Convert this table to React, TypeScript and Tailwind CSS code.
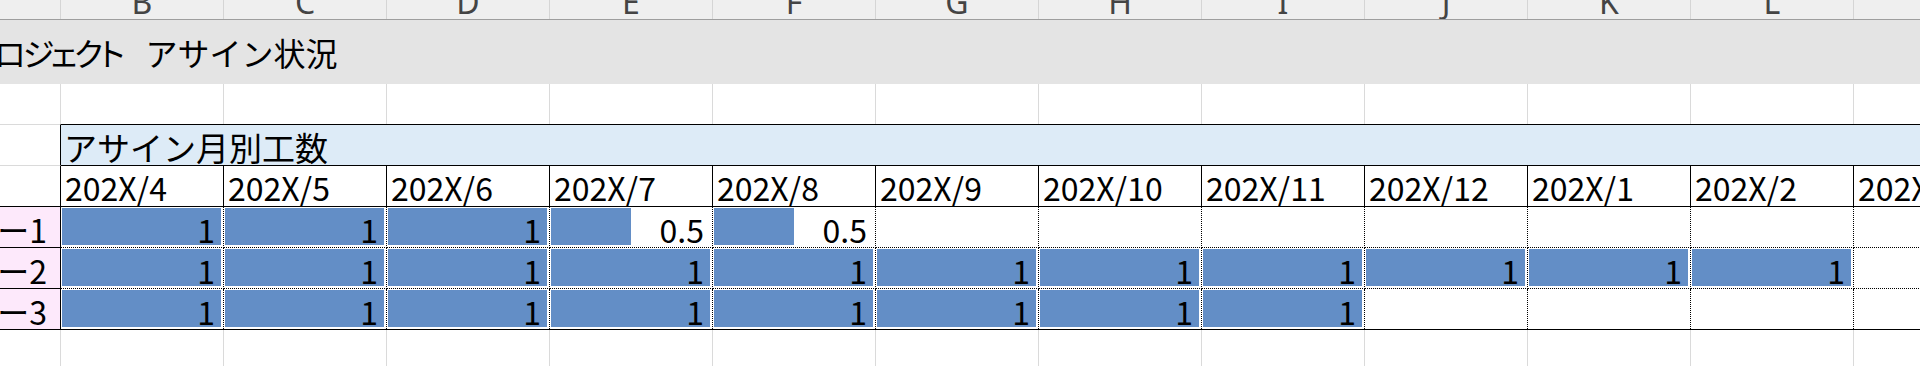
import React from 'react'

const cols = ['B', 'C', 'D', 'E', 'F', 'G', 'H', 'I', 'J', 'K', 'L', 'M']
const months = ['202X/4', '202X/5', '202X/6', '202X/7', '202X/8', '202X/9', '202X/10', '202X/11', '202X/12', '202X/1', '202X/2', '202X/3']

const members = [
  { name: 'メンバー1', values: [1, 1, 1, 0.5, 0.5, null, null, null, null, null, null, null] },
  { name: 'メンバー2', values: [1, 1, 1, 1, 1, 1, 1, 1, 1, 1, 1, null] },
  { name: 'メンバー3', values: [1, 1, 1, 1, 1, 1, 1, 1, null, null, null, null] },
]

const jp = "font-['Noto_Sans_CJK_JP','Noto_Sans',sans-serif]"

function DataCell({ value, bottom }: { value: number | null; bottom: boolean }) {
  return (
    <div
      className={`w-[163px] shrink-0 border-black border-dotted border-r ${bottom ? 'h-[41px] border-b' : 'h-[40px]'} pl-[1px] pr-[2px] pt-[1px] pb-[2px]`}
    >
      <div className="grid h-full">
        {value !== null && (
          <div className={`col-start-1 row-start-1 h-full bg-[#638ec6] ${value === 1 ? 'w-full' : 'w-1/2'}`} />
        )}
        {value !== null && (
          <span className="col-start-1 row-start-1 self-end justify-self-end pr-[6px] text-[32px] leading-[32px] text-black">
            {value}
          </span>
        )}
      </div>
    </div>
  )
}

function GridRow({ height, topBorder }: { height: string; topBorder?: boolean }) {
  return (
    <div className={`flex ${height} ${topBorder ? 'border-t border-black' : ''}`}>
      <div className="w-[61px] shrink-0 border-r border-[#dadada]" />
      {cols.map((c) => (
        <div key={c} className="w-[163px] shrink-0 border-r border-[#dadada]" />
      ))}
    </div>
  )
}

export default function App() {
  return (
    <div className={`w-[1920px] h-[366px] overflow-hidden bg-white ${jp}`}>
      {/* column letters */}
      <div className="flex h-[20px] bg-[#efefef] border-b border-[#9e9e9e] overflow-hidden">
        <div className="w-[61px] shrink-0 border-r border-[#d5d5d5]" />
        {cols.map((c) => (
          <div key={c} className="w-[163px] shrink-0 border-r border-[#d5d5d5] flex justify-center overflow-hidden">
            <span className="mt-[-14px] text-[32px] leading-[32px] text-[#444] font-['Noto_Sans',sans-serif]">{c}</span>
          </div>
        ))}
      </div>

      {/* title */}
      <div className="flex items-center h-[64px] bg-[#e4e4e4] overflow-hidden whitespace-nowrap text-[32px] leading-[32px] text-black">
        <span className="ml-[-32px] tracking-[-3px] [font-feature-settings:'palt']">プロジェクト </span>
        <span className="ml-[24px]">アサイン状況</span>
      </div>

      <GridRow height="h-[40px]" />

      {/* table heading */}
      <div className="flex h-[42px]">
        <div className="w-[61px] shrink-0 border-t border-b border-[#dadada] border-r border-r-black" />
        <div className="flex-1 flex items-end bg-[#ddebf7] border-t border-b border-black pl-[3px] pb-[1px] text-[33px] leading-[33px] text-black whitespace-nowrap">
          アサイン月別工数
        </div>
      </div>

      {/* months */}
      <div className="flex h-[41px] border-b border-black">
        <div className="w-[61px] shrink-0 border-r border-black" />
        {months.map((m) => (
          <div key={m} className="w-[163px] shrink-0 border-r border-black flex items-end pl-[4px] pb-[3px] overflow-hidden">
            <span className="text-[32px] leading-[32px] text-black whitespace-nowrap">{m}</span>
          </div>
        ))}
      </div>

      {/* members */}
      {members.map((mem, i) => {
        const bottom = i < members.length - 1
        return (
          <div key={mem.name} className="flex">
            <div
              className={`w-[61px] shrink-0 bg-[#fde9fb] border-r border-black ${bottom ? 'h-[41px] border-b' : 'h-[40px]'} flex items-end justify-end pr-[13px] pb-[2px] overflow-hidden`}
            >
              <span className="text-[32px] leading-[32px] text-black whitespace-nowrap">{mem.name}</span>
            </div>
            {mem.values.map((v, j) => (
              <DataCell key={j} value={v} bottom={bottom} />
            ))}
          </div>
        )
      })}

      <GridRow height="h-[40px]" topBorder />
    </div>
  )
}
